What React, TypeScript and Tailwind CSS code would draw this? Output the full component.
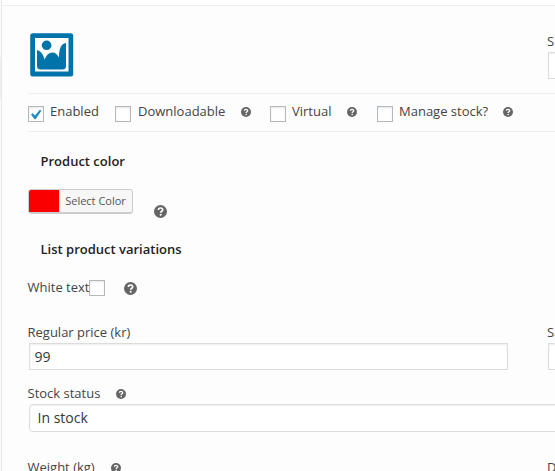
import type { ReactNode } from "react";

function Help({ size = 10, className = "" }: { size?: number; className?: string }) {
  return (
    <svg width={size} height={size} viewBox="0 0 20 20" className={`shrink-0 ${className}`}>
      <circle cx="10" cy="10" r="10" fill="#666" />
      <path d="M6.8 7.6C6.8 3.6 13.4 3.7 13.4 7.4C13.4 9.6 10.3 9.6 10.3 12.1" fill="none" stroke="#fff" strokeWidth="2.6" />
      <circle cx="10.3" cy="15" r="1.6" fill="#fff" />
    </svg>
  );
}

function Checkbox({ checked = false, className = "" }: { checked?: boolean; className?: string }) {
  return (
    <span className={`block h-4 w-4 shrink-0 border border-[#b4b9be] bg-white shadow-[inset_0_1px_2px_rgba(0,0,0,0.1)] ${className}`}>
      {checked && (
        <svg width="14" height="14" viewBox="0 0 14 14" className="block">
          <path d="M2 7.5L3.9 6.2L6 8.6L10.8 2.8L12.4 3.7L6.6 12.2L5.5 12.2Z" fill="#1e8cbe" />
        </svg>
      )}
    </span>
  );
}

function Text({ children, className = "" }: { children: ReactNode; className?: string }) {
  return <span className={`block shrink-0 whitespace-nowrap text-[13px] leading-[18px] ${className}`}>{children}</span>;
}

function ProductImage() {
  return (
    <svg width="44" height="44" viewBox="0 0 44 44" className="block shrink-0">
      <rect x="0.2" y="0.2" width="43" height="43.3" rx="2.5" fill="#0073aa" />
      <rect x="5" y="5" width="33.5" height="33.5" fill="#fff" />
      <circle cx="16.6" cy="12.3" r="4.8" fill="#0073aa" />
      <path d="M7 17C11 18 13.5 22 14.5 26.5C16.5 22 19 19.5 22.2 19.5C25.5 19.5 27.5 21.5 29 24.5C29 16 31 10.5 36 10V33Q36 36.5 32.5 36.5H10.5Q7 36.5 7 33Z" fill="#0073aa" />
    </svg>
  );
}

const field = "border border-[#ddd] bg-white shadow-[inset_0_1px_2px_rgba(0,0,0,0.07)]";

export default function App() {
  return (
    <div className="flex h-[471px] w-[555px] overflow-hidden bg-[#fdfdfd] font-['Open_Sans',sans-serif] text-[13px] text-[#444]">
      <div className="flex w-0.5 shrink-0 flex-col border-r border-[#e8e8e8] bg-[#fbfbfb] pt-[57px]">
        <div className="h-[42px] bg-[#eee]" />
      </div>
      <main className="w-[553px] shrink-0">
        <div className="h-[6px] border-b border-[#eee] bg-white" />
        <div className="flex h-[87px] pt-[27px] pl-[28px]">
          <ProductImage />
          <div className="ml-[473px] w-8 shrink-0">
            <Text className="-mt-px">SKU</Text>
            <div className={`mt-[2px] ml-px h-[27px] w-10 ${field}`} />
          </div>
        </div>
        <div className="ml-[26px] flex h-[39px] items-start border-y border-[#eee] pt-2">
          <Checkbox checked className="mt-1" />
          <Text className="ml-[6px] w-[65px]">Enabled</Text>
          <Checkbox className="mt-1" />
          <Text className="ml-[7px] w-[102.5px]">Downloadable</Text>
          <Help className="mt-[5px]" />
          <Checkbox className="mt-1 ml-[19.5px]" />
          <Text className="ml-[6px] w-[55px]">Virtual</Text>
          <Help className="mt-[5px]" />
          <Checkbox className="mt-1 ml-5" />
          <Text className="ml-[6px] w-[104px]">Manage stock?</Text>
          <Help className="mt-[5px]" />
        </div>
        <section className="h-[88px] pt-5 pl-[26px]">
          <h2 className="ml-[12.5px] text-[13px] leading-[18px] font-semibold text-[#222]">Product color</h2>
          <div className="mt-[19px] flex">
            <button className="flex h-[25px] w-[105px] overflow-hidden rounded-[3px] border border-[#ccc] bg-[#f7f7f7] shadow-[inset_0_-1px_0_#ccc]">
              <span className="h-[22px] w-[30px] shrink-0 bg-[#fb0000]" />
              <span className="flex-1 border-l border-[#ddd] pr-px text-center text-[11px] leading-[22px] whitespace-nowrap text-[#555]">Select Color</span>
            </button>
            <Help size={13} className="mt-[16px] ml-[21px]" />
          </div>
        </section>
        <section className="h-[103px] pt-5 pl-[26px]">
          <h2 className="ml-[12.5px] text-[13px] leading-[18px] font-semibold text-[#222]">List product variations</h2>
          <div className="mt-5 flex">
            <Text className="-ml-[0.5px] w-[61.5px]">White text</Text>
            <Checkbox className="mt-[2px]" />
            <Help size={13} className="mt-1 ml-[19px]" />
          </div>
        </section>
        <div className="flex h-[61px] pl-[26px]">
          <div className="w-[519px] shrink-0">
            <Text className="-ml-[0.5px]">Regular price (kr)</Text>
            <div className={`mt-[2px] ml-px h-[27px] w-[479px] px-[4.5px] text-[14px] leading-[25px] text-[#32373c] ${field}`}>99</div>
          </div>
          <div className="w-8 shrink-0">
            <Text>Sale price</Text>
            <div className={`mt-[2px] ml-px h-[27px] w-10 ${field}`} />
          </div>
        </div>
        <div className="h-[74px] pl-[26px]">
          <div className="flex">
            <Text className="-ml-[0.5px] w-[88px]">Stock status</Text>
            <Help className="mt-[5px]" />
          </div>
          <div className={`mt-[2px] ml-px h-[28px] w-[560px] rounded-[4px] px-[7.5px] text-[14px] leading-[26px] text-[#32373c] ${field}`}>In stock</div>
        </div>
        <div className="flex pl-[26px]">
          <Text className="-ml-[0.5px] w-[83px]">Weight (kg)</Text>
          <Help className="mt-[5px]" />
          <Text className="ml-[426.5px]">Dimensions</Text>
        </div>
      </main>
    </div>
  );
}
